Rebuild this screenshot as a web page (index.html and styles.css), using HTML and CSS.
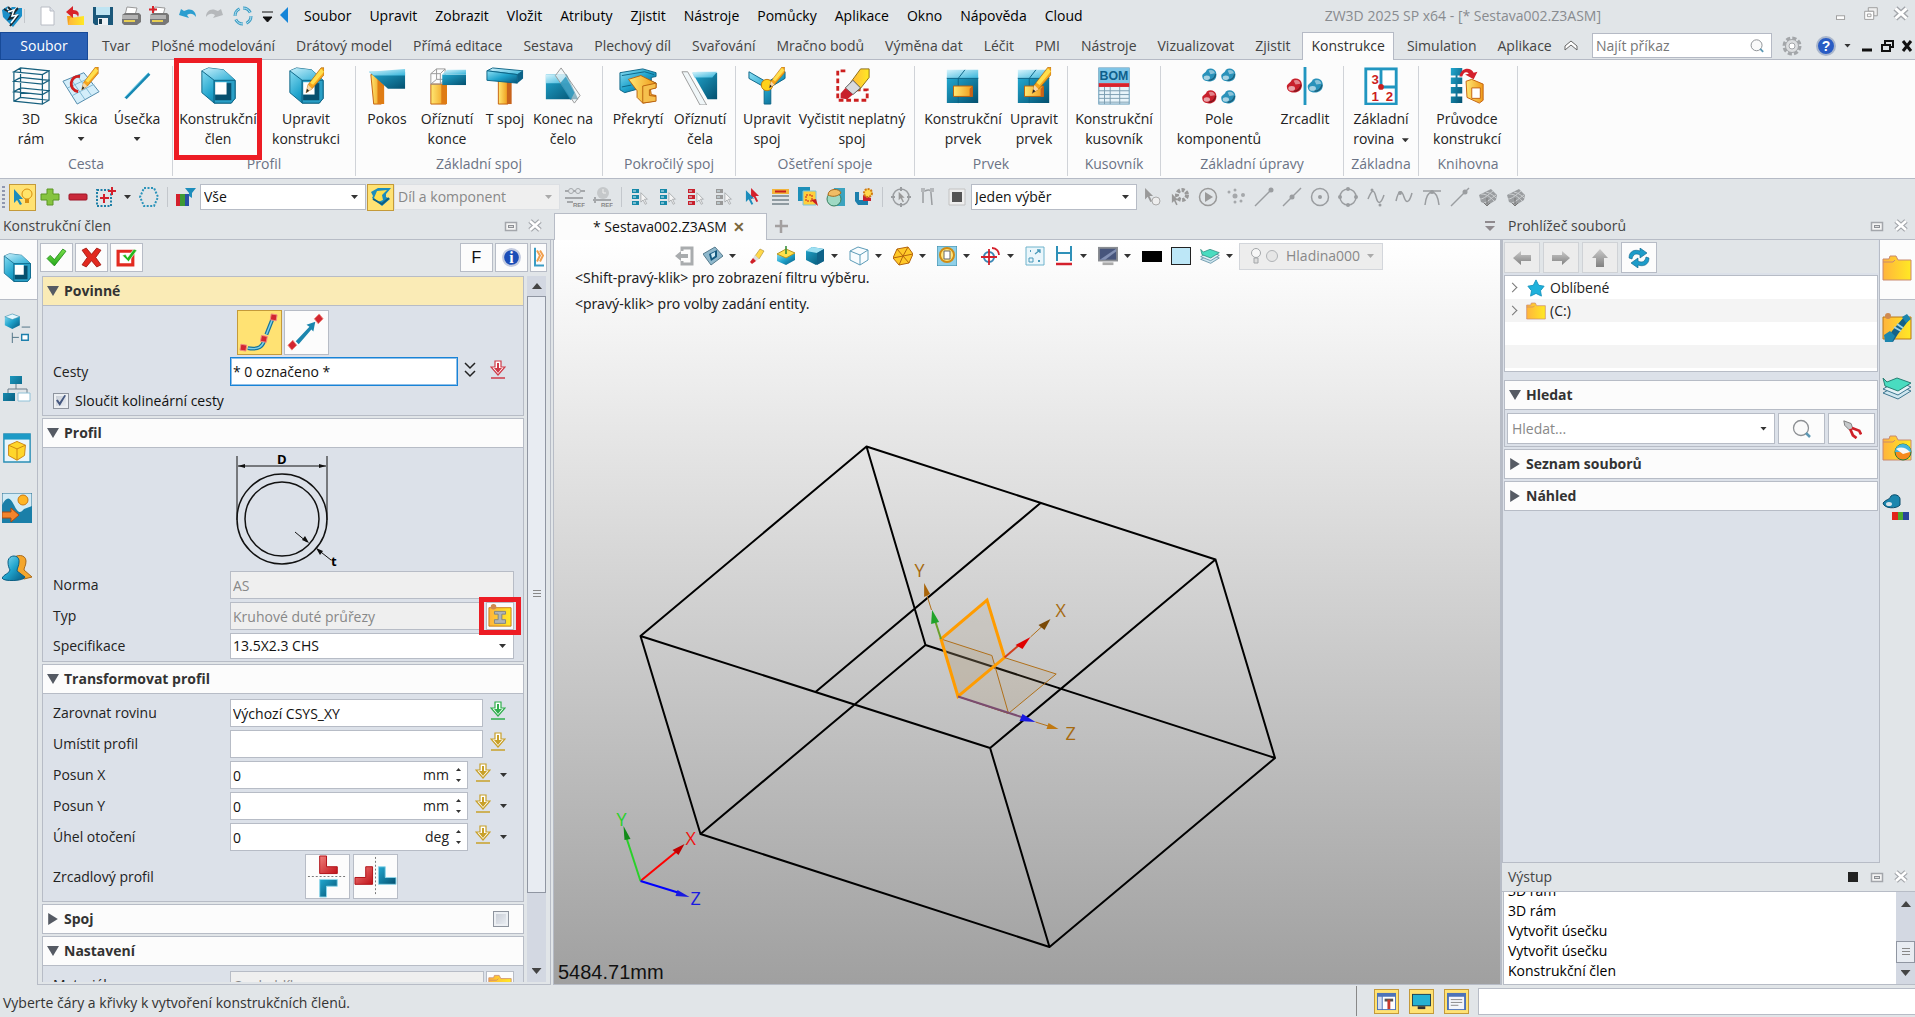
FILE: index.html
```html
<!DOCTYPE html>
<html lang="cs">
<head>
<meta charset="utf-8">
<title>ZW3D 2025 SP x64 - [* Sestava002.Z3ASM]</title>
<link rel="stylesheet" href="styles.css">
</head>
<body>
<svg class="defs" aria-hidden="true">
  <defs>
    <linearGradient id="gb" x1="0" y1="0" x2="1" y2="1"><stop offset="0" stop-color="#8fe0f4"/><stop offset=".5" stop-color="#1fa3cc"/><stop offset="1" stop-color="#07567c"/></linearGradient>
    <linearGradient id="gl" x1="0" y1="0" x2="1" y2="1"><stop offset="0" stop-color="#d6f4fd"/><stop offset="1" stop-color="#35b4da"/></linearGradient>
    <linearGradient id="gd" x1="0" y1="0" x2="1" y2="1"><stop offset="0" stop-color="#22a8d0"/><stop offset="1" stop-color="#04506f"/></linearGradient>
    <linearGradient id="gy" x1="0" y1="0" x2="1" y2="0"><stop offset="0" stop-color="#ffe873"/><stop offset="1" stop-color="#ef9a1a"/></linearGradient>
    <linearGradient id="go" x1="0" y1="0" x2="1" y2="0"><stop offset="0" stop-color="#ffb43c"/><stop offset="1" stop-color="#ffe924"/></linearGradient>
    <linearGradient id="gr" x1="0" y1="0" x2="1" y2="1"><stop offset="0" stop-color="#f0807c"/><stop offset="1" stop-color="#c01018"/></linearGradient>
    <linearGradient id="gg" x1="0" y1="0" x2="0" y2="1"><stop offset="0" stop-color="#c9c9c9"/><stop offset="1" stop-color="#808080"/></linearGradient>
    <linearGradient id="gn" x1="0" y1="0" x2="0" y2="1"><stop offset="0" stop-color="#7be04a"/><stop offset="1" stop-color="#24a81c"/></linearGradient>
  </defs>
  <symbol id="pencil" viewBox="0 0 20 26"><path d="M17 0h3v7L8 21l-6 4 2-8z" fill="#f7a61c" stroke="#b0680c" stroke-width=".7"/><path d="M17 1 6 15l3 2L20 4" fill="#ffdf4d"/><path d="m4 17 4 4-6 4z" fill="#f7d8a8"/><path d="m3 21 2 2-3 2z" fill="#222"/></symbol>
  <symbol id="frame3d" viewBox="0 0 40 40"><path d="M2 5 9 1 39 4 32 8zM2 5v31l30 3V8M39 4v31l-7 4M9 1v31l30 3M9 32l-7 4M2 26l30 3 7-4-30-3zM2 15l30 3 7-4-30-3z" fill="none" stroke="#17607e" stroke-width="1.300"/></symbol>
  <symbol id="sketch" viewBox="0 0 40 40"><path d="m1 15 22-9 16 20-23 13z" fill="#d4eefa" stroke="#4b86a8"/><path d="m9 12 15 22M16 9l15 21M6 22l22-10M11 30l23-12" stroke="#7db6d3" fill="none"/><path d="M19 10c-11-2-13 14-2 16" fill="none" stroke="#cf1f1f" stroke-width="3"/><use href="#pencil" x="17" y="0" width="23" height="25"/></symbol>
  <symbol id="line" viewBox="0 0 40 40"><path d="M8 33 33 7" stroke="#1789b3" stroke-width="3"/><path d="M7 32 32 6" stroke="#79cfe9"/></symbol>
  <symbol id="member" viewBox="0 0 40 40"><path d="m3 4 7-3 16 2 12 11v19l-4 5H16L3 27z" fill="url(#gb)" stroke="#0c6486"/><path d="M3 4l7-3 16 2 12 11H16z" fill="url(#gl)" opacity=".8"/><path d="m3 4 13 10v24" fill="none" stroke="#0c6486"/><path d="M16 14h22v19l-4 5H16z" fill="#2a9fc6" stroke="#0c6486"/><path d="M17 17h17v18H17z" fill="#07506f"/><path d="M17 16h12v13H17z" fill="#fff"/></symbol>
  <symbol id="member-edit" viewBox="0 0 40 40"><use href="#member"/><use href="#pencil" x="18" y="0" width="21" height="29"/></symbol>
  <symbol id="miter" viewBox="0 0 40 40"><path d="M3 8h11v31H6z" fill="url(#gy)" stroke="#c4600c"/><path d="M10 12l7 7v20h-7z" fill="#df7c14"/><path d="M1 5h38v18H21z" fill="url(#gd)"/><path d="m1 5 38-3v7H6z" fill="url(#gl)"/></symbol>
  <symbol id="trim-end" viewBox="0 0 40 40"><path d="M3 18h16v21H3z" fill="url(#gy)" stroke="#c4600c"/><path d="M14 18h6v21h-6z" fill="#df7c14"/><path d="M3 18V7l6-5h9v11l-5 5zM3 7h10v11M13 7l5-5M9 2v11l-6 5M9 13h9" fill="none" stroke="#999"/><path d="M15 8h25v11H15z" fill="url(#gd)"/><path d="m15 8 5-5h20v5z" fill="url(#gl)"/></symbol>
  <symbol id="tjoint" viewBox="0 0 40 40"><path d="M13 12h10v27H13z" fill="url(#gy)" stroke="#c4600c"/><path d="M22 15h5v24h-5z" fill="#c8631c"/><path d="M1 4 7 1l32 3-6 4z" fill="url(#gl)" stroke="#0c6486"/><path d="M1 4l32 4v9L1 14z" fill="url(#gb)" stroke="#0c6486"/><path d="m33 8 6-4v8l-6 5z" fill="#0b6288"/></symbol>
  <symbol id="endcap" viewBox="0 0 40 40"><path d="M2 8h22l12 26H2z" fill="url(#gd)"/><path d="M2 8h20l5 9H2z" fill="url(#gl)"/><path d="m12 9 6-8 20 29-6 8z" fill="#e8f1f5" fill-opacity=".6" stroke="#999"/><path d="m17 17 6-7 9 17-4 8z" fill="#2694ba" opacity=".8"/></symbol>
  <symbol id="overlap" viewBox="0 0 40 40"><path d="m1 6 24-4 14 4v4l-5 1v4l5 2-1 4-14 1L6 27l-5-3z" fill="url(#gb)" stroke="#0c6486"/><path d="m3 9 24-4 10 3M3 21l10-2" fill="none" stroke="#0c6486"/><path d="m10 13 13-4 16 8v5l-6 1 1 6 5 1-2 6-12 2-6-6v-7z" fill="url(#gy)" stroke="#b8600e"/><path d="m25 20 14-3v5l-7 2v6l7 1v5l-14 2z" fill="#f6c04d" stroke="#b8600e"/></symbol>
  <symbol id="trim-face" viewBox="0 0 40 40"><path d="M12 6h26v28H28z" fill="url(#gd)"/><path d="m12 6 5-1h21l-5 6H14z" fill="url(#gl)"/><path d="M1 5h6l20 35h-7z" fill="#e8f1f5" fill-opacity=".6" stroke="#999"/></symbol>
  <symbol id="joint-edit" viewBox="0 0 40 40"><path d="M1 5v7l16 9v18h7V21l15-9V5L20 16z" fill="url(#gb)" stroke="#0c6486"/><circle cx="20" cy="19" r="6" fill="#ffd21c" stroke="#c07a0c"/><use href="#pencil" x="19" y="0" width="21" height="23"/></symbol>
  <symbol id="erase-joint" viewBox="0 0 40 40"><path d="M13 4H5v31h31V24H25" fill="none" stroke="#cc1f1f" stroke-width="3" stroke-dasharray="5 3"/><path d="m29 2 9 0 0 9-11 14-9-8z" fill="url(#go)" stroke="#8a6a14"/><path d="m21 14 8 8-8 7-8-7z" fill="#d8dadd" stroke="#555"/><path d="m13 22 8 7-6 5-7-1 0-5z" fill="#c8202c"/></symbol>
  <symbol id="feature" viewBox="0 0 40 40"><path d="M3 11h33v27H3z" fill="url(#gd)"/><path d="M3 3h33v9H3z" fill="url(#gl)"/><path d="M15 12 22 3M3 12h33M15 12v26" stroke="#0c6486"/><path d="M10 20h20v11H10z" fill="url(#gy)" stroke="#b8600e"/><path d="m30 20-3 3v8h3z" fill="#c8631c"/></symbol>
  <symbol id="feature-edit" viewBox="0 0 40 40"><use href="#feature"/><use href="#pencil" x="16" y="0" width="22" height="29"/></symbol>
  <symbol id="part" viewBox="0 0 18 16"><path d="M1 10c-1-4 4-4 5-8 4-3 9-1 10 2 2 5 0 10-5 11C6 16 1 14 1 10z"/><path d="M8 3c3-2 7 0 7 3l-5 1z" fill="#fff" fill-opacity=".45"/><ellipse cx="6" cy="11" rx="3.500" ry="2.500" fill="#fff" fill-opacity=".6"/><path d="M8 14c4 0 7-3 8-7" fill="none" stroke="#000" stroke-opacity=".35" stroke-width="1.500"/></symbol>
  <symbol id="pattern" viewBox="0 0 40 40"><g fill="#2a92ba"><use href="#part" x="1" y="1" width="18" height="15"/><use href="#part" x="21" y="1" width="18" height="15"/><use href="#part" x="21" y="24" width="18" height="15"/></g><use href="#part" x="1" y="24" width="18" height="15" fill="#c8202c"/></symbol>
  <symbol id="mirror" viewBox="0 0 40 40"><use href="#part" x="0" y="11" width="18" height="17" fill="#c8202c"/><use href="#part" x="22" y="11" width="18" height="17" fill="#2a92ba"/><path d="M20 0v40" stroke="#2196c0" stroke-width="3"/></symbol>
  <symbol id="wizard" viewBox="0 0 40 40"><path d="M9 2v36" stroke="#1478a0" stroke-width="2"/><path d="M3 1h12v8H3zM3 11h12v7H3zM3 21h12v7H3zM3 31h12v7H3z" fill="url(#gd)"/><path d="M12 10C14 0 24 0 27 6l4-1-4 8-9-5 4-1c-3-3-6-1-7 3z" fill="#d4202c"/><path d="m19 15 6-2 12 5v17l-4 3-13-6z" fill="url(#gy)" stroke="#c4600c"/><path d="M25 22h9v11h-9z" fill="#fff" stroke="#c4600c"/></symbol>

  <symbol id="logo" viewBox="0 0 24 24"><path d="M2 6 8 2l-2 6 6-5 4 0-5 8 8-7 3 0v8l-9 11L3 13z" fill="#1a8fc9"/><path d="m4 5 8 5-3 5 8-2-7 9M8 3l5 5M18 4l-5 6 4 2" fill="none" stroke="#1b2a33" stroke-width="2"/><path d="m8 8 6-2-2 6 5-1-6 8" fill="none" stroke="#fff" stroke-width="1.500"/></symbol>
  <symbol id="newfile" viewBox="0 0 20 20"><path d="M4 1h9l4 4v14H4z" fill="#fff" stroke="#b8bcc4"/><path d="M13 1v4h4" fill="#dde2ea" stroke="#b8bcc4"/></symbol>
  <symbol id="open" viewBox="0 0 20 20"><path d="M2 10h5l2 2h9v7H3z" fill="#f5a21a"/><path d="m5 12 14-2v9H3z" fill="url(#go)"/><path d="M1 6l7-6v4c5 0 7 3 5 7-1-3-2-3-5-3v4z" fill="#d8232a"/></symbol>
  <symbol id="save" viewBox="0 0 20 20"><path d="M0 1h20v18H2l-2-2z" fill="#1b587a"/><path d="M3 1h14v8H3z" fill="#bfe4f2"/><path d="M5 12h10v7H5z" fill="#eef2f5"/><path d="M6 13h3v5H6z" fill="#17384a"/></symbol>
  <symbol id="print" viewBox="0 0 20 20"><path d="m6 1 10 1-2 7H4z" fill="#fff" stroke="#999"/><path d="m1 9 3-2h14l2 2v7l-4 3H3l-2-2z" fill="#777"/><path d="M1 9h16v4H1z" fill="#b3b3b3"/><path d="M3 14h11v2H3z" fill="#e8cf52"/></symbol>
  <symbol id="printplus" viewBox="0 0 20 20"><use href="#print"/><path d="M4 0v7M0 3.500h8" stroke="#d8232a" stroke-width="2"/></symbol>
  <symbol id="undo" viewBox="0 0 20 20"><path d="m2 9 2-6 3 2c7-4 12 0 12 6-3-4-6-4-9-2l2 3z" fill="#2b9ed0"/></symbol>
  <symbol id="redo" viewBox="0 0 20 20"><path d="m18 9-2-6-3 2C6 1 1 5 1 11c3-4 6-4 9-2l-2 3z" fill="#b5b8bb"/></symbol>
  <symbol id="cycle" viewBox="0 0 20 20"><circle cx="10" cy="10" r="8" fill="none" stroke="#3a9cc4" stroke-width="3" stroke-dasharray="9 3.500"/><circle cx="10" cy="10" r="8" fill="none" stroke="#bfe6f4" stroke-width="1" stroke-dasharray="9 3.500"/></symbol>

  <symbol id="bulbpick" viewBox="0 0 20 20"><path d="M1 2v14l3-3 3 5 2-1-3-5h4z" fill="#1c8dbc"/><circle cx="14" cy="7" r="5" fill="#ffe46a" stroke="#d98f10"/><path d="M12 12h4v4h-4z" fill="#d98f10"/></symbol>
  <symbol id="plus" viewBox="0 0 20 20"><path d="M7 2h6v5h6v6h-6v5H7v-5H1V7h6z" fill="#86c440" stroke="#5b9625"/></symbol>
  <symbol id="minus" viewBox="0 0 20 20"><rect x="1" y="7" width="18" height="6" rx="1" fill="#c9283a" stroke="#9e1526"/></symbol>
  <symbol id="gridplus" viewBox="0 0 20 20"><path d="M1 3h14v16H1z" fill="none" stroke="#1d7fa6" stroke-width="2" stroke-dasharray="2 1.500"/><path d="M8 7v9M4 11h9M16 0v8M12 4h8" stroke="#d4202c" stroke-width="2"/></symbol>
  <symbol id="hex" viewBox="0 0 20 20"><path d="M5 1h10l4 9-4 9H5l-4-9z" fill="none" stroke="#2a93ba" stroke-width="2" stroke-dasharray="2 1.500"/></symbol>
  <symbol id="colfilter" viewBox="0 0 20 20"><path d="M0 7h4v12H0z" fill="#d4202c"/><path d="M4 7h5v12H4z" fill="#3f9a35"/><path d="M9 7h4v12H9z" fill="#2a4fa6"/><path d="M9 1h11l-4 5v5l-3-2V6z" fill="#1c8dbc"/></symbol>
  <symbol id="shapepick" viewBox="0 0 20 20"><path d="m0 5 7-4 13 0-5 6 0 3 4 2-8 7-10-8 1-2z" fill="#1c8dbc"/><path d="m6 4 10-1-5 5 1 5-5 2-4-4z" fill="#ffdf4d"/><path d="m2 12 9 5 7-6" fill="none" stroke="#0b5f84" stroke-width="2"/></symbol>
  <symbol id="pick" viewBox="0 0 12 18"><path d="M1 1v13l3-3 3 6 2-1-3-6h4z"/></symbol>
  <symbol id="list" viewBox="0 0 20 20"><path d="M2 2h7v4H2zM2 8h7v4H2zM2 14h7v4H2z"/><path d="M3 4h3M3 10h3M3 16h3" stroke="#d8f0f8"/><use href="#pick" x="10" y="5" width="9" height="13" fill="#f4f4f4" stroke="#9a9da0"/></symbol>
  <symbol id="duopick" viewBox="0 0 20 20"><use href="#pick" x="8" y="0" width="11" height="16" fill="#d4202c"/><use href="#pick" x="3" y="2" width="11" height="17" fill="#1c8dbc"/></symbol>
  <symbol id="rows" viewBox="0 0 20 20"><path d="M2 2h17v5H2z" fill="#f2b43a"/><path d="M5 4.500h11" stroke="#c81e1e" stroke-width="2"/><path d="M2 9h17M2 13h17M2 17h17" stroke="#8f9ba1" stroke-width="2"/></symbol>
  <symbol id="layerspick" viewBox="0 0 20 20"><path d="M0 0h12v14H0z" fill="#1d8fb8"/><path d="M5 4h13v14H5z" fill="#ffcf3a" stroke="#7ac6de"/><path d="M8 8h6v6H8z" fill="none" stroke="#c81e1e" stroke-dasharray="2 1"/><path d="m20 19-7-6 5-1z" fill="#c81e1e"/></symbol>
  <symbol id="capture" viewBox="0 0 20 20"><path d="M8 1h11v18H5z" fill="#3ba3bf"/><circle cx="8" cy="12" r="7" fill="#9fd9c4" stroke="#39805f"/><path d="M2 8c0-7 12-7 13-2-4 4-9 4-13 2z" fill="#f1bd66" stroke="#a86a1c"/></symbol>
  <symbol id="weldpick" viewBox="0 0 20 20"><path d="M1 5v9l3 4h10v-5H5V5z" fill="#1c7fac"/><path d="M9 8v6h8v-3z" fill="#c8202c"/><circle cx="14" cy="6" r="4" fill="#ffd84a" stroke="#d07a12" stroke-width="2" stroke-dasharray="2 1"/></symbol>
  <symbol id="targetpick" viewBox="0 0 20 20"><circle cx="10" cy="10" r="8" fill="none" stroke="#9a9da0" stroke-width="1.500"/><path d="M10 0v4M10 16v4M0 10h4M16 10h4" stroke="#9a9da0" stroke-width="2"/><use href="#pick" x="7" y="4" width="8" height="12" fill="#999"/></symbol>
  <symbol id="chain" viewBox="0 0 20 20"><path d="M4 16V3M6 4c4-2 6-1 6 2l1 12" fill="none" stroke="#9a9da0" stroke-width="1.500"/><path d="M2 1h4v4H2zM11 1h4v4h-4z" fill="#b5b8bb"/></symbol>
  <symbol id="square" viewBox="0 0 20 20"><path d="M2 2h16v16H2z" fill="#eee" stroke="#c2c2c2"/><path d="M5 5h10v10H5z" fill="#555"/></symbol>
  <symbol id="ghostpick" viewBox="0 0 20 20"><use href="#pick" x="2" y="0" width="11" height="16" fill="#999"/><circle cx="14" cy="14" r="4" fill="#eee" stroke="#aaa"/></symbol>
  <symbol id="gearpick" viewBox="0 0 20 20"><circle cx="12" cy="8" r="5" fill="none" stroke="#999" stroke-width="4" stroke-dasharray="3 1.500"/><use href="#pick" x="1" y="6" width="9" height="13" fill="#999"/></symbol>
  <symbol id="play" viewBox="0 0 20 20"><circle cx="10" cy="10" r="8.500" fill="none" stroke="#999" stroke-width="1.500"/><path d="m7 5 8 5-8 5z" fill="#999"/></symbol>
  <symbol id="dots" viewBox="0 0 20 20"><g fill="#a5a8ab"><circle cx="3" cy="5" r="1.500"/><circle cx="9" cy="9" r="2.500"/><circle cx="17" cy="8" r="2"/><circle cx="9" cy="15" r="1.500"/><circle cx="15" cy="14" r="1.500"/><circle cx="9" cy="3" r="1.500"/></g></symbol>
  <symbol id="gline" viewBox="0 0 20 20"><path d="M1 19 17 3" stroke="#9a9da0" stroke-width="1.500"/><circle cx="17" cy="3" r="2.500" fill="#9a9da0"/></symbol>
  <symbol id="gmid" viewBox="0 0 20 20"><path d="M1 19 19 1" stroke="#9a9da0" stroke-width="1.500"/><circle cx="10" cy="10" r="2.500" fill="#9a9da0"/></symbol>
  <symbol id="gon" viewBox="0 0 20 20"><path d="M1 19 19 1" stroke="#9a9da0" stroke-width="1.500"/><circle cx="15" cy="5" r="2.500" fill="#9a9da0"/></symbol>
  <symbol id="gcenter" viewBox="0 0 20 20"><circle cx="10" cy="10" r="8.500" fill="none" stroke="#9a9da0" stroke-width="1.500"/><circle cx="10" cy="10" r="2" fill="#9a9da0"/></symbol>
  <symbol id="gquad" viewBox="0 0 20 20"><circle cx="10" cy="10" r="8" fill="none" stroke="#9a9da0" stroke-width="1.500"/><g fill="#9a9da0"><circle cx="10" cy="2" r="2"/><circle cx="10" cy="18" r="2"/><circle cx="2" cy="10" r="2"/><circle cx="18" cy="10" r="2"/></g></symbol>
  <symbol id="gwave" viewBox="0 0 20 20"><path d="M2 12c4-10 6-10 8-2s5 7 8-2" fill="none" stroke="#9a9da0" stroke-width="1.500"/><circle cx="6" cy="3" r="1.500" fill="#9a9da0"/><circle cx="14" cy="18" r="1.500" fill="#9a9da0"/></symbol>
  <symbol id="gwave2" viewBox="0 0 20 20"><path d="M2 14c3-13 6-10 8-4s5 7 8-4" fill="none" stroke="#9a9da0" stroke-width="1.500"/><circle cx="6" cy="6" r="2" fill="#9a9da0"/></symbol>
  <symbol id="gtan" viewBox="0 0 20 20"><path d="M1 4h18M3 18C5 1 15 1 17 18" fill="none" stroke="#9a9da0" stroke-width="1.500"/><circle cx="10" cy="5" r="2" fill="#9a9da0"/></symbol>
  <symbol id="gmesh" viewBox="0 0 20 20"><path d="m1 8 6-3 6-3 6 6-1 5-8 5-7-3z" fill="#9a9da0"/><path d="M3 7c6 0 9 3 13 7M8 5c5 1 8 4 10 6M2 12c4 0 8-4 13-8M6 16c4-1 7-5 12-8" fill="none" stroke="#cdd0d2"/><path d="M9 11v8M6 16l3 3 3-3" stroke="#777" fill="none"/></symbol>

  <symbol id="float" viewBox="0 0 16 14"><rect x="2.500" y="3.500" width="11" height="8" fill="#f4f4f4" stroke="#a3a6ab" stroke-width="1.500"/><rect x="5.500" y="6.500" width="5" height="2" fill="#ddd" stroke="#8d9095"/></symbol>
  <symbol id="close" viewBox="0 0 16 16"><path d="m3 3 10 9M13 3 3 12" stroke="#a3a6ab" stroke-width="5"/><path d="m3 3 10 9M13 3 3 12" stroke="#fff" stroke-width="2.500"/></symbol>
  <symbol id="ok" viewBox="0 0 20 20"><path d="m1 11 3-3 4 4L16 2l3 2L8 18z" fill="url(#gn)" stroke="#1f8a18" stroke-width=".8"/></symbol>
  <symbol id="no" viewBox="0 0 20 20"><path d="m1 3 4-2 5 6 5-6 4 2-5 7 5 7-4 2-5-6-5 6-4-2 5-7z" fill="#e22a20" stroke="#a01510" stroke-width=".8"/></symbol>
  <symbol id="apply" viewBox="0 0 20 20"><path d="M2 4h14v13H2z" fill="#fff" stroke="#e22a20" stroke-width="3"/><path d="m6 8 3-1 2 3 6-8 3 1-8 11z" fill="#22b81c" stroke="#fff" stroke-width=".6"/></symbol>
  <symbol id="rollout" viewBox="0 0 12 20"><path d="M2 0v18h9" fill="none" stroke="#3a9cc4" stroke-width="2"/><path d="m4 3 3 5-3 6M7 3l3 5-3 6" fill="none" stroke="#f0a050" stroke-width="2"/></symbol>
  <symbol id="path1" viewBox="0 0 44 44"><path d="M10 38c12 2 15-2 17-8M29 24l6-15" fill="none" stroke="#16749a" stroke-width="4"/><path d="M10 38c12 2 15-2 17-8M29 24l6-15" fill="none" stroke="#7ed0ea" stroke-width="1.500"/><g fill="#d22630" stroke="#f08a80"><path d="m3 34 6 1-1 6-6-1zM24 25l6 1-1 6-6-1zM34 3l6 1-1 6-6-1z"/></g></symbol>
  <symbol id="path2" viewBox="0 0 44 44"><path d="M11 31 25 16l-3-2 9-3-2 10-2-2-13 15z" fill="#1c86ae"/><g fill="#d22630" stroke="#f08a80"><path d="m8 30 4 5-5 5-4-5zM35 3l4 5-5 5-4-5z"/></g></symbol>
  <symbol id="drop" viewBox="0 0 16 20"><path d="M5 1h6v6h4l-7 8-7-8h4z" fill="#fff" stroke="currentColor" stroke-width="1.200"/><path d="M7 3h2v5h3l-4 5-4-5h3z" fill="currentColor"/><path d="M1 18h14" stroke="currentColor" stroke-width="1.500"/></symbol>
  <symbol id="lib" viewBox="0 0 26 26"><path d="M1 4h24v20H1z" fill="url(#go)" stroke="#c47a14"/><circle cx="6" cy="3" r="3" fill="#cf8a50"/><path d="M7 8h12v3h-4v6h4v4H7v-4h4v-6H7z" fill="#aeb4b8" stroke="#7c8286"/></symbol>
  <symbol id="mirrorh" viewBox="0 0 44 44"><path d="M2 22h40" stroke="#777" stroke-dasharray="2 2"/><path d="M14 1h7v11h11v7H14z" fill="url(#gr)" stroke="#b01018"/><path d="M14 25h18v7H21v11h-7z" fill="url(#gd)" stroke="#8fd6ea"/></symbol>
  <symbol id="mirrorv" viewBox="0 0 44 44"><path d="M22 2v40" stroke="#777" stroke-dasharray="2 2"/><path d="M12 12h7v18H1v-7h11z" fill="url(#gr)" stroke="#b01018"/><path d="M25 12h7v11h11v7H25z" fill="url(#gd)" stroke="#8fd6ea"/></symbol>

  <symbol id="tree" viewBox="0 0 30 32"><path d="m2 4 8-3 8 3v9l-8 4-8-4z" fill="url(#gb)"/><path d="m2 4 8-3 8 3-8 3z" fill="#e5f7fd" stroke="#3e8eac" stroke-width=".6"/><path d="M10 21v11M10 26h7M20 15h9" stroke="#4b6f82" fill="none"/><path d="M20 23h7v6h-7z" fill="#fff" stroke="#1c7fac" stroke-width="1.500"/></symbol>
  <symbol id="hier" viewBox="0 0 30 30"><path d="M14 8v8M6 22v-6h19v6" fill="none" stroke="#6c7f8b"/><path d="M8 3h12v8H8zM1 20h12v8H1z" fill="url(#gd)"/><path d="M16 20h12v8H16z" fill="#fff" stroke="#8fc2d8"/></symbol>
  <symbol id="view" viewBox="0 0 30 32"><path d="M1 1h28v30H1z" fill="#e9f5fb" stroke="#2a8fb5" stroke-width="1.500"/><path d="M1 1h28v6H1z" fill="#1d9ac6"/><path d="m6 13 9-4 9 4-1 11-8 5-9-5z" fill="#ffd62a" stroke="#cc8310"/><path d="m6 13 9 4 9-4M15 17v12" fill="none" stroke="#cc8310"/></symbol>
  <symbol id="scene" viewBox="0 0 30 30"><path d="M0 0h30v30H0z" fill="#d3ebf5" stroke="#276f92"/><path d="M0 12c5-9 8-8 12 0 4 8 6 9 10 4l8-3v17H0z" fill="#1a7fa8"/><circle cx="21" cy="7" r="5" fill="#ffb524" stroke="#c97812"/><path d="M0 19h9v-4l8 7-8 7v-4H0z" fill="#f2842c" stroke="#a84a10"/></symbol>
  <symbol id="users" viewBox="0 0 30 28"><path d="M12 5c1-5 12-5 12 2 0 5-2 6-2 9l8 7-8 2-7-5z" fill="#f4a62c" stroke="#a86a1c"/><path d="M6 8c0-8 12-8 11 0 0 4-2 6-2 9l8 6c0 4-22 5-23 1 2-4 7-4 8-8-1-2-2-4-2-8z" fill="url(#gb)" stroke="#0b5f84"/></symbol>
  <symbol id="folder" viewBox="0 0 30 26"><path d="M1 4h6l1-3h6l2 4h13v20H1z" fill="url(#go)" stroke="#c98a70"/><path d="M1 7h10l2-2" fill="none" stroke="#c98a70"/></symbol>
  <symbol id="boltbox" viewBox="0 0 30 30"><path d="M1 4h28v22H1z" fill="url(#go)" stroke="#b97818"/><circle cx="6" cy="3" r="3" fill="#cf8a50"/><path d="m5 27 5-9 12-14 5 3-11 14-5 8z" fill="#156288"/><path d="m2 22 6-4 5 5-3 6H3zM20 4l5-3 4 5-5 4z" fill="#1c86ae"/><path d="m12 14 7 4M15 11l6 4" stroke="#9fd5e8" stroke-width="2"/></symbol>
  <symbol id="sheets" viewBox="0 0 30 24"><path d="m1 17 15 6 13-8-14-6z" fill="#cfe6ef" stroke="#3e7790"/><path d="m1 13 15 6 13-8-14-6z" fill="#e3f1f6" stroke="#3e7790"/><path d="m1 2 4 4 10-4 14 5-13 8L3 10z" fill="#49dcc0" stroke="#277f74"/></symbol>
  <symbol id="folderball" viewBox="0 0 30 26"><use href="#folder"/><circle cx="21" cy="17" r="8" fill="#f58a1e" stroke="#2a7a3c"/><path d="M13 17a8 8 0 0 1 16 0z" fill="#45b5de"/><path d="M14 14q7-4 14 3l-7 2z" fill="#f7f7f7"/></symbol>
  <symbol id="partcolor" viewBox="0 0 30 28"><path d="M1 9C4 5 8 6 9 2c4-3 9 0 9 3v6c-3 4-16 4-17-2z" fill="#1b86ae" stroke="#0b4d6b"/><ellipse cx="7" cy="10" rx="3" ry="2" fill="#d6e3e9"/><path d="M10 18h6v8h-6z" fill="#e2231a"/><path d="M16 18h5v8h-5z" fill="#4da82e"/><path d="M21 18h6v8h-6z" fill="#29439a"/></symbol>
  <symbol id="aleft" viewBox="0 0 20 20"><path d="m1 10 8-7v4h10v6H9v4z" fill="url(#gg)"/></symbol>
  <symbol id="aright" viewBox="0 0 20 20"><path d="m19 10-8-7v4H1v6h10v4z" fill="url(#gg)"/></symbol>
  <symbol id="aup" viewBox="0 0 20 20"><path d="m10 1 8 9h-4v9H6v-9H2z" fill="url(#gg)"/></symbol>
  <symbol id="reload" viewBox="0 0 22 20"><path d="M1 10C1 3 7 1 12 3V0l7 5-7 5V7C8 5 5 6 4 11zM21 10c0 7-6 9-11 7v3l-7-5 7-5v3c4 2 7 1 8-4z" fill="#1d9cc9" stroke="#0b6288" stroke-width=".6"/></symbol>
  <symbol id="star" viewBox="0 0 20 20"><path d="m10 1 3 6 6 1-4 5 1 6-6-3-6 3 1-6-4-5 6-1z" fill="#20b2dc" stroke="#1493bd"/></symbol>
  <symbol id="lens" viewBox="0 0 20 20"><circle cx="9" cy="9" r="7.500" fill="#fafafa" stroke="#8c8f93" stroke-width="1.300"/><path d="m14 14 4 4" stroke="#5c98b4" stroke-width="2.500"/></symbol>
  <symbol id="pliers" viewBox="0 0 22 22"><path d="m2 2 8 3 2 6-4 1-5-5z" fill="#c5c8ca" stroke="#777"/><path d="m11 10 8 3 2 4M9 11l3 7 4 3" fill="none" stroke="#cf2028" stroke-width="3"/></symbol>
  <symbol id="gear" viewBox="0 0 20 20"><circle cx="10" cy="10" r="7.500" fill="none" stroke="#a3a6a9" stroke-width="4" stroke-dasharray="3.900 2"/><circle cx="10" cy="10" r="6.500" fill="#dcdee0" stroke="#a3a6a9"/><circle cx="10" cy="10" r="3" fill="#fff" stroke="#a3a6a9"/></symbol>

  <symbol id="exit" viewBox="0 0 20 20"><path d="M8 5V2h10v16H8v-3" fill="none" stroke="#a9acae" stroke-width="3"/><path d="m1 10 6-5v3h7v4H7v3z" fill="#a9acae"/></symbol>
  <symbol id="plane" viewBox="0 0 20 20"><path d="m0 8 12-7 8 9-12 9z" fill="#8fb8cc" stroke="#557a8c"/><path d="M6 8l8-4v7l-6 4z" fill="#145a80"/><path d="m8 8 4-2v4l-3 2z" fill="#cfeaf5"/></symbol>
  <symbol id="eraser" viewBox="0 0 20 20"><path d="m13 3 4 2-5 8-4-3z" fill="#ffd84a" stroke="#a88a2c" stroke-width=".6"/><path d="m8 9 4 4-3 2-3-3z" fill="#ddd"/><path d="m6 12 3 3-4 3-2-2z" fill="#cf2028"/></symbol>
  <symbol id="boxy" viewBox="0 0 20 20"><path d="m1 8 9 3 9-4v7l-9 5-9-4z" fill="url(#gb)"/><path d="m1 8 9-5 9 4-9 5z" fill="#ffe04a" stroke="#b99420"/><path d="M10 0v8" stroke="#2c8a34" stroke-width="1.500"/></symbol>
  <symbol id="boxb" viewBox="0 0 20 20"><path d="m1 5 6-4 12 2v12l-8 4-10-5z" fill="url(#gd)"/><path d="m1 5 6-4 12 2-7 4z" fill="#9fe0f2"/><path d="m12 7 7-4v12l-7 4z" fill="#0f6288"/></symbol>
  <symbol id="boxw" viewBox="0 0 20 20"><path d="m1 5 8-4 10 3v10l-8 5-10-5z" fill="#f8fcfe" stroke="#5d9cb8"/><path d="m1 5 10 4 8-5M11 9v10" fill="none" stroke="#5d9cb8"/></symbol>
  <symbol id="poly" viewBox="0 0 20 20"><path d="m4 3 11-2 5 7-4 9-10 2-6-7z" fill="#ffc928" stroke="#b5650c"/><path d="m4 3 6 7 5-9M10 10l10-2M10 10l6 7M10 10l-4 9M10 10l-10 2" fill="none" stroke="#b5650c"/></symbol>
  <symbol id="zoomdoc" viewBox="0 0 20 20"><path d="M0 0h20v20H0z" fill="#8fd0e8" stroke="#3a86a4"/><circle cx="10" cy="9" r="7" fill="#ffe680" stroke="#d08c14" stroke-width="2"/><path d="M7 5h6v8H7z" fill="#fff" stroke="#666"/></symbol>
  <symbol id="target" viewBox="0 0 20 20"><circle cx="8" cy="11" r="5" fill="none" stroke="#3a86b4" stroke-width="2"/><path d="M8 3v16M0 11h16M11 2c5 0 7 4 7 7" fill="none" stroke="#d4202c" stroke-width="1.800"/></symbol>
  <symbol id="fit" viewBox="0 0 20 20"><path d="M1 1h18v18H1z" fill="#eaf6fb" stroke="#6fb3cc"/><path d="M10 8l5-4M15 7V4h-3" fill="none" stroke="#4a9aba" stroke-width="1.300"/><path d="M4 12h4v4H4z" fill="none" stroke="#4a9aba"/><path d="M5 5h1M13 15h2" stroke="#4a9aba" stroke-width="2"/></symbol>
  <symbol id="dim" viewBox="0 0 20 20"><path d="M3 0v15M17 0v15M3 7h14" stroke="#2e90b8" stroke-width="2"/><path d="M2 18h16" stroke="#d4202c" stroke-width="2.500"/></symbol>
  <symbol id="screen" viewBox="0 0 22 20"><path d="M0 0h22v16H0z" fill="#8a8d92"/><path d="M2 2h18v12H2z" fill="#47557c"/><path d="M2 14 20 2v3L8 14z" fill="#8290b4"/><path d="M5 17h12v3H5z" fill="#aaa"/></symbol>
  <symbol id="lamp" viewBox="0 0 12 18"><circle cx="6" cy="6" r="4.500" fill="#f7f7f7" stroke="#a3a6a9"/><path d="M4 11h4v5H4z" fill="#ddd" stroke="#a3a6a9"/></symbol>
  <symbol id="tool" viewBox="0 0 20 20"><path d="M0 1h20v18H0z" fill="#4d73b8"/><path d="M6 5h13v13H6z" fill="#fff"/><path d="M1 5h4v13H1z" fill="#d5def0"/><path d="M8 7h9v3H8z" fill="#555"/><path d="M11 8h3v10h-3z" fill="#c8392c"/></symbol>
  <symbol id="monitor" viewBox="0 0 20 20"><path d="M0 2h20v13H0z" fill="#25414f"/><path d="M1 3h18v11H1z" fill="#25b2d2"/><path d="M6 15h8v3H6z" fill="#333"/></symbol>
  <symbol id="note" viewBox="0 0 20 20"><path d="M0 1h20v18H0z" fill="#4d73b8"/><path d="M2 5h16v13H2z" fill="#f4f6fb"/><path d="M4 8h12M4 11h12M4 14h8" stroke="#888"/></symbol>
</svg>

<div class="app">
<header class="titlebar">
  <svg class="i24"><use href="#logo"/></svg><span class="vsep"></span>
  <div class="quick">
    <button aria-label="Nový"><svg><use href="#newfile"/></svg></button><button aria-label="Otevřít"><svg><use href="#open"/></svg></button><button aria-label="Uložit"><svg><use href="#save"/></svg></button><button aria-label="Tisk"><svg><use href="#print"/></svg></button><button aria-label="Rychlý tisk"><svg><use href="#printplus"/></svg></button><button aria-label="Zpět"><svg><use href="#undo"/></svg></button><button aria-label="Znovu"><svg><use href="#redo"/></svg></button><button aria-label="Obnovit"><svg><use href="#cycle"/></svg></button><button class="narrow" aria-label="Více"><svg><path d="M5 6h11M6 11h9l-4.500 5z" fill="#111" stroke="#111"/></svg></button><button class="narrow" aria-label="Skrýt nabídku"><svg><path d="M13 1v16L5 9z" fill="#1585d8"/></svg></button>
  </div>
  <nav class="menu"><a href="#">Soubor</a><a href="#">Upravit</a><a href="#">Zobrazit</a><a href="#">Vložit</a><a href="#">Atributy</a><a href="#">Zjistit</a><a href="#">Nástroje</a><a href="#">Pomůcky</a><a href="#">Aplikace</a><a href="#">Okno</a><a href="#">Nápověda</a><a href="#">Cloud</a></nav>
  <span class="apptitle">ZW3D 2025 SP x64 - [* Sestava002.Z3ASM]</span>
  <div class="winbtns">
    <button aria-label="Minimalizovat"><svg viewBox="0 0 20 20"><rect x="5" y="12" width="9" height="4" fill="#fff" stroke="#999"/></svg></button><button aria-label="Obnovit okno"><svg viewBox="0 0 20 20"><path d="M7 3h10v9h-4V7H7z" fill="#eee" stroke="#999"/><path d="M3 7h10v9H3z" fill="#fff" stroke="#999"/><path d="M6 10h4v3H6z" fill="none" stroke="#999"/></svg></button><button aria-label="Zavřít"><svg><use href="#close"/></svg></button>
  </div>
</header>

<nav class="tabs">
  <a class="file" href="#">Soubor</a><a href="#">Tvar</a><a href="#">Plošné modelování</a><a href="#">Drátový model</a><a href="#">Přímá editace</a><a href="#">Sestava</a><a href="#">Plechový díl</a><a href="#">Svařování</a><a href="#">Mračno bodů</a><a href="#">Výměna dat</a><a href="#">Léčit</a><a href="#">PMI</a><a href="#">Nástroje</a><a href="#">Vizualizovat</a><a href="#">Zjistit</a><a class="active" href="#">Konstrukce</a><a href="#">Simulation</a><a href="#">Aplikace</a>
  <div class="tabtools">
    <button aria-label="Sbalit pás karet"><svg class="i16" viewBox="0 0 16 16"><path d="m2 8 6-5 6 5v4L8 7l-6 5z" fill="#fff" stroke="#666"/></svg></button>
    <label class="search"><input type="text" placeholder="Najít příkaz" aria-label="Najít příkaz"><svg class="i16"><use href="#lens"/></svg></label>
    <button aria-label="Nastavení"><svg class="i20"><use href="#gear"/></svg></button>
    <button aria-label="Nápověda" class="helpbtn"><svg class="i20" viewBox="0 0 20 20"><circle cx="10" cy="10" r="9" fill="#2a5cc4" stroke="#a9b6cc" stroke-width="2"/><text x="10" y="15" text-anchor="middle" font-size="14" class="icon-bold" fill="#fff">?</text></svg><i class="caret"></i></button>
    <button aria-label="Minimalizovat dokument"><svg class="i16" viewBox="0 0 16 16"><path d="M3 12h10" stroke="#111" stroke-width="3"/></svg></button>
    <button aria-label="Obnovit dokument"><svg class="i16" viewBox="0 0 16 16"><path d="M6 6V3h8v6h-3M3 7h8v6H3zM3 7h8M6 3h8" fill="none" stroke="#111" stroke-width="2"/></svg></button>
    <button aria-label="Zavřít dokument"><svg class="i16" viewBox="0 0 16 16"><path d="m4 3 8 10M12 3 4 13" stroke="#111" stroke-width="3"/></svg></button>
  </div>
</nav>

<section class="ribbon">
  <div class="group g-cesta"><div class="items"><button><svg><use href="#frame3d"/></svg>3D<br>rám</button><button><svg><use href="#sketch"/></svg>Skica<i class="caret"></i></button><button class="w60"><svg><use href="#line"/></svg>Úsečka<i class="caret"></i></button></div><h2>Cesta</h2></div>
  <div class="group g-profil"><div class="items"><button class="w88 marked"><svg><use href="#member"/></svg>Konstrukční<br>člen</button><button class="w88"><svg><use href="#member-edit"/></svg>Upravit<br>konstrukci</button></div><h2>Profil</h2></div>
  <div class="group g-spoj"><div class="items"><button class="w54"><svg><use href="#miter"/></svg>Pokos</button><button class="w64"><svg><use href="#trim-end"/></svg>Oříznutí<br>konce</button><button class="w50"><svg><use href="#tjoint"/></svg>T spoj</button><button class="w64"><svg><use href="#endcap"/></svg>Konec na<br>čelo</button></div><h2>Základní spoj</h2></div>
  <div class="group g-pokr"><div class="items"><button class="w60"><svg><use href="#overlap"/></svg>Překrytí</button><button class="w60"><svg><use href="#trim-face"/></svg>Oříznutí<br>čela</button></div><h2>Pokročilý spoj</h2></div>
  <div class="group g-oset"><div class="items"><button class="w54"><svg><use href="#joint-edit"/></svg>Upravit<br>spoj</button><button class="w116"><svg><use href="#erase-joint"/></svg>Vyčistit neplatný<br>spoj</button></div><h2>Ošetření spoje</h2></div>
  <div class="group g-prvek"><div class="items"><button class="w88"><svg><use href="#feature"/></svg>Konstrukční<br>prvek</button><button class="w54"><svg><use href="#feature-edit"/></svg>Upravit<br>prvek</button></div><h2>Prvek</h2></div>
  <div class="group g-kus"><div class="items"><button class="w88"><svg viewBox="0 0 40 40"><rect x="4" y="1" width="32" height="38" fill="#e8f4fa" stroke="#5e96b6"/><path d="M4 1h32v16H4z" fill="#7fc4e6"/><path d="M4 17h32v4H4z" fill="#d8222c"/><path d="M4 25h32M4 29h32M4 33h32M4 37h32M10 21v18M16 21v18M26 21v18" stroke="#7a9cb0"/><text x="20" y="14" text-anchor="middle" class="icon-bold" font-size="13" fill="#0d5f8c">BOM</text></svg>Konstrukční<br>kusovník</button></div><h2>Kusovník</h2></div>
  <div class="group g-uprav"><div class="items"><button class="w88"><svg><use href="#pattern"/></svg>Pole<br>komponentů</button><button class="w64"><svg><use href="#mirror"/></svg>Zrcadlit</button></div><h2>Základní úpravy</h2></div>
  <div class="group g-zakl"><div class="items"><button class="w64"><svg viewBox="0 0 40 40"><rect x="4" y="2" width="32" height="37" fill="#fff" stroke="#2196c0" stroke-width="3"/><path d="M20 2v19h16" fill="none" stroke="#2196c0" stroke-width="3"/><circle cx="20" cy="21" r="3" fill="#cc1f1f"/><g class="icon-bold" font-size="14" fill="#cc1f1f"><text x="10" y="18">3</text><text x="10" y="36">1</text><text x="25" y="36">2</text></g></svg>Základní<br>rovina <i class="caret inl"></i></button></div><h2>Základna</h2></div>
  <div class="group g-knih"><div class="items"><button class="w88"><svg><use href="#wizard"/></svg>Průvodce<br>konstrukcí</button></div><h2>Knihovna</h2></div>
</section>

<section class="selbar">
  <span class="grip"></span>
  <button class="on" aria-label="Výběr"><svg><use href="#bulbpick"/></svg></button><button aria-label="Přidat"><svg><use href="#plus"/></svg></button><button aria-label="Odebrat"><svg><use href="#minus"/></svg></button><button aria-label="Oblast"><svg><use href="#gridplus"/></svg></button><button class="w15" aria-label="Typ oblasti"><i class="caret"></i></button><button aria-label="Mnohoúhelník"><svg><use href="#hex"/></svg></button><span class="vsep"></span><button aria-label="Filtr barev"><svg><use href="#colfilter"/></svg></button>
  <span class="select"><select aria-label="Filtr"><option>Vše</option></select><i class="caret"></i></span>
  <button class="on" aria-label="Rozsah"><svg><use href="#shapepick"/></svg></button>
  <span class="select off"><select aria-label="Rozsah výběru" disabled><option>Díl a komponent</option></select><i class="caret"></i></span>
  <button aria-label="Reference"><svg viewBox="0 0 20 20"><path d="M0 4h20M0 11h18M2 15h6" stroke="#a5a8ab" stroke-width="2"/><circle cx="6" cy="4" r="2.500" fill="#e1e5e8" stroke="#a5a8ab"/><circle cx="13" cy="4" r="2.500" fill="#e1e5e8" stroke="#a5a8ab"/><text x="8" y="20" font-size="6" class="icon-bold" fill="#888">REF</text></svg></button><button aria-label="Reference v čase"><svg viewBox="0 0 20 20"><circle cx="10" cy="6" r="6" fill="#c5c8ca"/><path d="M10 2v4h3" stroke="#eee" fill="none"/><path d="M0 13h18M2 10v6" stroke="#a5a8ab" stroke-width="2"/><text x="8" y="20" font-size="6" class="icon-bold" fill="#888">REF</text></svg></button><span class="vsep"></span>
  <button class="blue" aria-label="Vybrat vše"><svg><use href="#list"/></svg></button><button class="blue" aria-label="Vybrat poslední"><svg><use href="#list"/></svg></button><button class="red" aria-label="Zrušit výběr"><svg><use href="#list"/></svg></button><button class="gray" aria-label="Předchozí výběr"><svg><use href="#list"/></svg></button><button aria-label="Invertovat"><svg><use href="#duopick"/></svg></button><button aria-label="Seznam"><svg><use href="#rows"/></svg></button><button aria-label="Vrstvy"><svg><use href="#layerspick"/></svg></button><button aria-label="Zachytit"><svg><use href="#capture"/></svg></button><button aria-label="Svar"><svg><use href="#weldpick"/></svg></button><span class="vsep"></span>
  <button aria-label="Cíl"><svg><use href="#targetpick"/></svg></button><button aria-label="Řetěz"><svg><use href="#chain"/></svg></button><button aria-label="Okno"><svg><use href="#square"/></svg></button>
  <span class="select"><select aria-label="Režim výběru"><option>Jeden výběr</option></select><i class="caret"></i></span>
  <button aria-label="Ukazatel"><svg><use href="#ghostpick"/></svg></button><button aria-label="Nastavení výběru"><svg><use href="#gearpick"/></svg></button><button aria-label="Spustit"><svg><use href="#play"/></svg></button><button aria-label="Body"><svg><use href="#dots"/></svg></button><button aria-label="Koncový bod"><svg><use href="#gline"/></svg></button><button aria-label="Střed úsečky"><svg><use href="#gmid"/></svg></button><button aria-label="Střed"><svg><use href="#gcenter"/></svg></button><button aria-label="Kvadrant"><svg><use href="#gquad"/></svg></button><button aria-label="Křivka"><svg><use href="#gwave"/></svg></button><button aria-label="Bod křivky"><svg><use href="#gwave2"/></svg></button><button aria-label="Tečna"><svg><use href="#gtan"/></svg></button><button aria-label="Na úsečce"><svg><use href="#gon"/></svg></button><button aria-label="Plocha"><svg><use href="#gmesh"/></svg></button><button aria-label="Síť"><svg><use href="#gmesh"/></svg></button>
</section>

<main class="work">
  <aside class="left">
    <div class="dockhead"><span>Konstrukční člen</span><button aria-label="Plovoucí"><svg class="i16"><use href="#float"/></svg></button><button aria-label="Zavřít"><svg class="i16"><use href="#close"/></svg></button></div>
    <div class="dock">
      <nav class="strip"><button class="cur" aria-label="Konstrukční člen"><svg><use href="#member"/></svg></button><button aria-label="Historie"><svg><use href="#tree"/></svg></button><button aria-label="Sestava"><svg><use href="#hier"/></svg></button><button aria-label="Pohledy"><svg><use href="#view"/></svg></button><button aria-label="Scéna"><svg><use href="#scene"/></svg></button><button aria-label="Role"><svg><use href="#users"/></svg></button></nav>
      <form class="panel">
        <div class="cmds"><button type="button" aria-label="OK"><svg><use href="#ok"/></svg></button><button type="button" aria-label="Storno"><svg><use href="#no"/></svg></button><button type="button" aria-label="Použít"><svg><use href="#apply"/></svg></button><button type="button" class="push">F</button><button type="button" aria-label="Informace"><svg viewBox="0 0 20 20"><circle cx="10" cy="10" r="8" fill="#1b4db8" stroke="#c3cbe0" stroke-width="2"/><text x="10" y="15" text-anchor="middle" font-size="15" class="icon-serif" fill="#fff">i</text></svg></button><button type="button" class="slim" aria-label="Rozbalit"><svg viewBox="0 0 12 20"><use href="#rollout"/></svg></button></div>
        <div class="panelbody">
          <div class="sections">
            <section class="sec"><h3 class="req"><i class="tri"></i>Povinné</h3>
              <div class="body p4">
                <div class="modes"><button type="button" class="sq sel" aria-label="Řetězec"><svg><use href="#path1"/></svg></button><button type="button" class="sq" aria-label="Úsečka"><svg><use href="#path2"/></svg></button></div>
                <div class="row tall"><label for="cesty">Cesty</label><div class="ctl"><input id="cesty" class="focus" value="* 0 označeno *"><button type="button" class="ic" aria-label="Rozbalit seznam"><svg viewBox="0 0 16 20"><path d="m3 3 5 5 5-5M3 11l5 5 5-5" fill="none" stroke="#222" stroke-width="1.500"/></svg></button><button type="button" class="ic redc" aria-label="Vybrat"><svg><use href="#drop"/></svg></button></div></div>
                <label class="check"><input type="checkbox" checked>Sloučit kolineární cesty</label>
              </div></section>
            <section class="sec"><h3><i class="tri"></i>Profil</h3>
              <div class="body">
                <svg class="diagram" viewBox="230 449 110 118" role="img" aria-label="Průřez trubky"><g fill="none" stroke="#111"><path d="M237 456v64M327 456v64M238 466h88"/><circle cx="282" cy="519" r="45" stroke-width="1.500"/><circle cx="282" cy="519" r="37" stroke-width="1.500"/><path d="m295 532 12 10M317 549l14 11"/></g><path d="m238 466 7-2v4zM326 466l-7-2v4zM309 543l-7-3 3-4zM316 548l7 3-3 4z" fill="#111"/><g font-size="13" font-weight="700"><text x="277" y="464">D</text><text x="331" y="566">t</text></g></svg>
                <div class="row"><label for="norma">Norma</label><div class="ctl"><input id="norma" value="AS" disabled></div></div>
                <div class="row"><label for="typ">Typ</label><div class="ctl typ"><input id="typ" value="Kruhové duté průřezy" disabled><button type="button" class="libbtn hot" aria-label="Knihovna profilů"><svg><use href="#lib"/></svg></button></div></div>
                <div class="row low"><label for="spec">Specifikace</label><span class="select"><select id="spec"><option>13.5X2.3 CHS</option></select><i class="caret"></i></span></div>
              </div></section>
            <section class="sec"><h3><i class="tri"></i>Transformovat profil</h3>
              <div class="body p5">
                <div class="row"><label for="rovina">Zarovnat rovinu</label><div class="ctl wide"><input id="rovina" value="Výchozí CSYS_XY"><button type="button" class="ic green" aria-label="Vybrat rovinu"><svg><use href="#drop"/></svg></button></div></div>
                <div class="row"><label for="umistit">Umístit profil</label><div class="ctl wide"><input id="umistit" value=""><button type="button" class="ic gold" aria-label="Vybrat bod"><svg><use href="#drop"/></svg></button></div></div>
                <div class="row"><label for="px">Posun X</label><div class="ctl"><span class="num"><input id="px" value="0"><span>mm</span><span class="spin"><i class="caret up"></i><i class="caret"></i></span></span><button type="button" class="ic gold" aria-label="Zadat hodnotu"><svg><use href="#drop"/></svg></button><i class="caret"></i></div></div>
                <div class="row"><label for="py">Posun Y</label><div class="ctl"><span class="num"><input id="py" value="0"><span>mm</span><span class="spin"><i class="caret up"></i><i class="caret"></i></span></span><button type="button" class="ic gold" aria-label="Zadat hodnotu"><svg><use href="#drop"/></svg></button><i class="caret"></i></div></div>
                <div class="row"><label for="uhel">Úhel otočení</label><div class="ctl"><span class="num"><input id="uhel" value="0"><span>deg</span><span class="spin"><i class="caret up"></i><i class="caret"></i></span></span><button type="button" class="ic gold" aria-label="Zadat hodnotu"><svg><use href="#drop"/></svg></button><i class="caret"></i></div></div>
                <div class="row mir"><span>Zrcadlový profil</span><div class="mirbtns"><button type="button" class="sq" aria-label="Zrcadlit vodorovně"><svg><use href="#mirrorh"/></svg></button><button type="button" class="sq" aria-label="Zrcadlit svisle"><svg><use href="#mirrorv"/></svg></button></div></div>
              </div></section>
            <section class="sec closed"><h3><i class="tri side"></i><label for="spoj">Spoj</label><input id="spoj" type="checkbox"></h3></section>
            <section class="sec"><h3><i class="tri"></i>Nastavení</h3>
              <div class="body p5"><div class="row"><label for="mat">Materiál</label><div class="ctl typ"><input id="mat" value="Ocel uhlík" disabled><button type="button" class="libbtn" aria-label="Vybrat materiál"><svg><use href="#folder"/></svg></button></div></div></div></section>
          </div>
          <div class="vscroll"><span class="cap"><i class="caret big up"></i></span><span class="thumb"></span><span class="rest"><i class="caret big"></i></span></div>
        </div>
      </form>
    </div>
  </aside>

  <section class="center">
    <div class="doctabs"><a class="doc" href="#">* Sestava002.Z3ASM <b>✕</b></a><button aria-label="Nová karta"><svg class="i16" viewBox="0 0 16 16"><path d="M8 2v13M2 8h13" stroke="#a3a0a0" stroke-width="2.500"/></svg></button><button class="more" aria-label="Seznam karet"><svg class="i16" viewBox="0 0 16 16"><path d="M3 4h10" stroke="#8f8a8e" stroke-width="2"/><path d="M3 8h10l-5 5z" fill="#8f8a8e"/></svg></button></div>
    <div class="view">
      <svg class="model" viewBox="555 240 945 744" role="img" aria-label="Drátový model sestavy">
        <g fill="none" stroke="#000" stroke-width="2" stroke-linejoin="round">
          <path d="M867 446.500 1216 559.500 990.600 748 641 636zM701 834 1050 947 1275.500 758 926 645zM867 446.500 926 645M1216 559.500 1275.500 758M990.600 748 1050 947M641 636 701 834M1041 503 816 692"/>
        </g>
        <path d="M958.500 696.500 941.500 639 987.500 600 1005 657.600z" fill="#b4a48a" fill-opacity=".2"/>
        <path d="M941.500 639 992.400 655.500 1009 713.400 958.500 696.500zM1005 657.600l51.700 16.400-47.700 39.400-50.500-17z" fill="#b08a58" fill-opacity=".15" stroke="#b0701a"/>
        <path d="M958.500 696.500 941.500 639 987.500 600 1005 657.600z" fill="none" stroke="#ff9c00" stroke-width="3"/>
        <path d="M958.500 696.500 1028 719" stroke="#7a4c70" stroke-width="2"/><path d="m1036 722 16 5M932 610l-5-16M1031 637l12-11" stroke="#b0701a"/>
        <path d="M941.500 639 936 622" stroke="#6aa02a" stroke-width="2"/><path d="m1005 657.600 14-12" stroke="#d04020" stroke-width="2"/>
        <path d="m932.600 610-1 14 8-2z" fill="#1fa32a"/><path d="m1031 637-8 12-7-4z" fill="#e00000"/><path d="m1036 722-13-8-3 7z" fill="#1a1ae0"/>
        <path d="m924.600 583 0 14 6-3z" fill="#a96408"/><path d="m1051 619-6 11-6-5z" fill="#7a4a08"/><path d="m1059 729-10-6-2 6z" fill="#c07810"/>
        <g class="axis" fill="#a66a10"><text x="915" y="577">Y</text><text x="1056" y="617">X</text><text x="1066" y="740">Z</text></g>
        <path d="M641 881 680 849" stroke="#f00" stroke-width="2"/><path d="M641 881 627 838" stroke="#2ad02a" stroke-width="2"/><path d="m641 881 39 12" stroke="#00f" stroke-width="2"/>
        <path d="m685 844-6 11-6-5z" fill="#c00000"/><path d="m624 826 1 14 6-1z" fill="#128a18"/><path d="m690 897-12-7-2 6z" fill="#1a1ae0"/>
        <g class="axis"><text x="617" y="826" fill="#2ad02a">Y</text><text x="686" y="845" fill="#f01010">X</text><text x="691" y="905" fill="#1a1ae0">Z</text></g>
      </svg>
      <div class="hud">
        <div class="viewbar"><button aria-label="Ukončit"><svg><use href="#exit"/></svg></button><button aria-label="Rovina"><svg><use href="#plane"/></svg></button><i class="caret"></i><button aria-label="Smazat"><svg><use href="#eraser"/></svg></button><button aria-label="Promítnout"><svg><use href="#boxy"/></svg></button><button aria-label="Stínovaný"><svg><use href="#boxb"/></svg></button><i class="caret"></i><button aria-label="Drátový"><svg><use href="#boxw"/></svg></button><i class="caret"></i><button aria-label="Síť"><svg><use href="#poly"/></svg></button><i class="caret"></i><button aria-label="Přiblížit"><svg><use href="#zoomdoc"/></svg></button><i class="caret"></i><button aria-label="Otáčet"><svg><use href="#target"/></svg></button><i class="caret"></i><button aria-label="Vše na obrazovku"><svg><use href="#fit"/></svg></button><button aria-label="Kóta"><svg><use href="#dim"/></svg></button><i class="caret"></i><button aria-label="Pozadí"><svg><use href="#screen"/></svg></button><i class="caret"></i><button aria-label="Barva hran"><span class="ink"></span></button><button aria-label="Barva ploch"><span class="face"></span></button><button aria-label="Hladiny"><svg><use href="#sheets"/></svg></button><i class="caret"></i><span class="layer"><svg><use href="#lamp"/></svg><svg viewBox="0 0 12 18"><circle cx="6" cy="9" r="5.500" fill="#e6e6e6" stroke="#b0b3b6"/></svg><span class="select"><select aria-label="Hladina" disabled><option>Hladina000</option></select><i class="caret"></i></span></span></div>
        <p>&lt;Shift-pravý-klik&gt; pro zobrazení filtru výběru.</p>
        <p>&lt;pravý-klik&gt; pro volby zadání entity.</p>
        <output>5484.71mm</output>
      </div>
    </div>
  </section>

  <aside class="right">
    <div class="dockhead"><span>Prohlížeč souborů</span><button aria-label="Plovoucí"><svg class="i16"><use href="#float"/></svg></button><button aria-label="Zavřít"><svg class="i16"><use href="#close"/></svg></button></div>
    <div class="dock files">
      <div class="browser">
        <div class="navbtns"><button disabled aria-label="Zpět"><svg><use href="#aleft"/></svg></button><button disabled aria-label="Vpřed"><svg><use href="#aright"/></svg></button><button disabled aria-label="Nahoru"><svg><use href="#aup"/></svg></button><button aria-label="Obnovit"><svg><use href="#reload"/></svg></button></div>
        <ul class="filetree"><li><i class="chev"></i><svg><use href="#star"/></svg>Oblíbené</li><li><i class="chev"></i><svg><use href="#folder"/></svg>(C:)</li><li></li><li></li></ul>
        <section class="sec"><h3><i class="tri"></i>Hledat</h3><div class="find"><span class="select"><input type="text" placeholder="Hledat..." aria-label="Hledat"><i class="caret"></i></span><button aria-label="Spustit hledání"><svg><use href="#lens"/></svg></button><button aria-label="Možnosti hledání"><svg><use href="#pliers"/></svg></button></div></section>
        <section class="sec closed"><h3><i class="tri side"></i>Seznam souborů</h3></section>
        <section class="sec closed"><h3><i class="tri side"></i>Náhled</h3></section>
      </div>
      <nav class="strip"><button class="cur" aria-label="Soubory"><svg><use href="#folder"/></svg></button><button aria-label="Knihovna dílů"><svg><use href="#boltbox"/></svg></button><button aria-label="Hladiny"><svg><use href="#sheets"/></svg></button><button aria-label="Materiály"><svg><use href="#folderball"/></svg></button><button aria-label="Barvy dílů"><svg><use href="#partcolor"/></svg></button></nav>
    </div>
    <div class="dockhead out"><span>Výstup</span><button aria-label="Zastavit"><svg class="i16" viewBox="0 0 16 16"><path d="M3 3h10v10H3z" fill="#222"/></svg></button><button aria-label="Plovoucí"><svg class="i16"><use href="#float"/></svg></button><button aria-label="Zavřít"><svg class="i16"><use href="#close"/></svg></button></div>
    <div class="output"><div class="log"><p>3D rám</p><p>3D rám</p><p>Vytvořit úsečku</p><p>Vytvořit úsečku</p><p>Konstrukční člen</p></div><div class="vscroll short"><span class="cap"><i class="caret big up"></i></span><span class="thumb"></span><span class="rest"><i class="caret big"></i></span></div></div>
  </aside>
</main>

<footer class="status"><span>Vyberte čáry a křivky k vytvoření konstrukčních členů.</span><div class="statbtns"><button aria-label="Nástroje"><svg><use href="#tool"/></svg></button><button aria-label="Zobrazení"><svg><use href="#monitor"/></svg></button><button aria-label="Zprávy"><svg><use href="#note"/></svg></button></div><input type="text" aria-label="Příkazový řádek"></footer>
</div>
</body>
</html>
```
FILE: styles.css
```css
* { box-sizing: border-box; }
body { margin: 0; background: #e1e5e8; color: #111; font: 14px/20px "Open Sans", "Noto Sans", sans-serif; }
button, input, select { font: inherit; color: inherit; margin: 0; padding: 0; border: 0; background: none; border-radius: 0; }
input, select { min-width: 0; width: 100%; background: #fff; border: 1px solid #b7bcc6; outline: 0; }
select { appearance: none; opacity: 1; }
a { color: inherit; text-decoration: none; }
h2, h3, p, ul { margin: 0; padding: 0; font: inherit; }
svg { display: block; }
.defs { position: absolute; width: 0; height: 0; }
.icon-bold { font-family: "Liberation Sans", sans-serif; font-weight: bold; }
.icon-serif { font-family: "Liberation Serif", serif; font-weight: bold; }
.i16 { width: 16px; height: 16px; }
.i20 { width: 20px; height: 20px; }
.i24 { width: 24px; height: 24px; }
.caret { flex: none; width: 7px; height: 4px; background: #333; clip-path: polygon(0 0, 100% 0, 50% 100%); display: block; }
.caret.up { transform: rotate(180deg); }
.caret.big { width: 10px; height: 6px; background: #444; }
.caret.inl { display: inline-block; vertical-align: middle; }
.vsep { width: 1px; height: 20px; background: #c3c7cc; flex: none; }
.select { display: grid; align-items: center; }
.select > * { grid-area: 1 / 1; }
.select > .caret { justify-self: end; margin-right: 8px; }

.app { display: flex; flex-direction: column; height: 100vh; overflow: hidden; }
.titlebar { display: flex; align-items: center; height: 32px; flex: none; white-space: nowrap; }
.titlebar .vsep { height: 14px; }
.quick { display: flex; margin-left: 8px; }
.quick button { width: 28px; height: 24px; display: grid; place-items: center; }
.quick svg, .selbar button svg { width: 20px; height: 20px; }
.quick .narrow { width: 18px; }
.menu { display: flex; gap: 18px; margin-left: 11px; color: #000; }
.apptitle { margin-left: auto; color: #888b8f; }
.winbtns { display: flex; gap: 10px; margin: 0 4px 4px 230px; }
.winbtns svg { width: 20px; height: 18px; }

.tabs { display: flex; height: 28px; flex: none; border-bottom: 1px solid #b5bac5; color: #444; white-space: nowrap; }
.tabs > a { flex: none; padding: 0 10px 0 11px; line-height: 28px; height: 28px; }
.tabs .file { width: 88px; padding: 0; margin-right: 3px; text-align: center; background: #2b61b5; border: 1px solid #174a98; color: #fff; line-height: 26px; }
.tabs .active { background: #fcfcfc; border: 1px solid #b5bac5; border-bottom: 0; padding: 0 8px; margin: 0 2px; line-height: 26px; color: #333; }
.tabtools { display: flex; flex: 1; align-items: center; justify-content: flex-end; gap: 4px; }
.search { display: flex; width: 180px; height: 25px; align-items: center; background: #fff; border: 1px solid #b5bac5; padding: 0 6px 0 3px; margin: 0 6px 0 9px; }
.search input { border: 0; height: 20px; }
.search input::placeholder { color: #777; }
.helpbtn { display: flex; align-items: center; gap: 8px; margin: 0 4px 0 10px; }

.ribbon { display: flex; height: 119px; flex: none; background: #fcfcfc; border-bottom: 1px solid #b5bac5; padding-top: 6px; }
.group { display: flex; flex-direction: column; border-right: 1px solid #d0d3d8; height: 110px; flex: none; }
.group h2 { text-align: center; color: #6b7385; line-height: 20px; margin-top: auto; margin-bottom: 2px; }
.items { display: flex; align-items: flex-start; padding-left: 4px; }
.ribbon button { width: 50px; text-align: center; white-space: nowrap; padding-top: 1px; color: #222; }
.ribbon button svg { width: 38px; height: 38px; margin: 0 auto 4px; }
.ribbon button > .caret { margin: 8px auto; }
.ribbon button > .caret.inl { margin: 0 0 0 4px; }
.ribbon .w54 { width: 54px; }
.ribbon .w60 { width: 62px; }
.ribbon .w64 { width: 66px; }
.ribbon .w88 { width: 88px; }
.ribbon .w116 { width: 116px; }
.g-cesta { width: 173px; }
.g-cesta .items { padding-left: 6px; }
.g-profil { width: 183px; }
.g-profil .items { padding-left: 1px; }
.g-spoj { width: 247px; }
.g-pokr { width: 133px; }
.g-oset { width: 179px; }
.g-prvek { width: 153px; }
.g-kus { width: 93px; }
.g-kus .items { padding-left: 2px; }
.g-uprav { width: 183px; }
.g-uprav .items { padding-left: 14px; gap: 9px; }
.g-zakl { width: 75px; }
.g-knih { width: 99px; }
.marked { position: relative; }
.ribbon .marked::after { content: ""; position: absolute; inset: -8px 0 -11px; border: 5px solid #ed1c24; }

.selbar { display: flex; align-items: center; height: 34px; flex: none; padding-top: 2px; }
.grip { width: 3px; height: 22px; margin: 0 4px 0 2px; background: repeating-linear-gradient(#8f97b0 0 2px, transparent 2px 4px); }
.selbar button { width: 28px; height: 27px; display: grid; place-items: center; flex: none; }
.selbar .w15 { width: 15px; }
.selbar .on { width: 27px; background: #ffe273; border: 1px solid #c49a3a; }
.selbar .vsep { margin: 0 4px; }
.selbar .blue { fill: #1688a8; }
.selbar .red { fill: #c8202c; }
.selbar .gray { fill: #999; }
.selbar .select { width: 166px; margin-right: 1px; flex: none; }
.selbar select { height: 26px; padding-left: 3px; }
.selbar .off select { color: #888; background: #efefef; border-color: #dcdfe3; }
.off .caret { background: #aaa; }

.work { flex: 1; min-height: 0; display: grid; grid-template-columns: 553px minmax(0, 1fr) 413px; }
.left, .center, .right { display: flex; flex-direction: column; min-height: 0; min-width: 0; }
.dockhead { display: flex; align-items: center; gap: 8px; height: 27px; flex: none; padding: 0 10px 0 3px; color: #444; border-bottom: 1px solid #b7bcc6; }
.dockhead span { flex: 1; }
.dock { display: flex; flex: 1; min-height: 0; }
.strip { width: 37px; flex: none; display: flex; flex-direction: column; }
.strip button { height: 60px; display: grid; place-items: center start; padding: 0 0 4px 2px; }
.strip button svg { width: 30px; height: 30px; }
.strip .cur { background: #fcfcfc; border-bottom: 1px solid #b7bcc6; }
.panel { flex: 1; border: 1px solid #b7bcc6; border-top: 0; margin-right: 2px; display: flex; flex-direction: column; min-width: 0; }
.cmds { display: flex; gap: 2px; padding: 3px 3px 4px 2px; }
.cmds button, .sq, .navbtns button, .find button, .libbtn { background: #fcfcfc; border: 1px solid #b7bcc6; display: grid; place-items: center; flex: none; }
.cmds button { width: 33px; height: 29px; }
.cmds svg { width: 21px; height: 21px; }
.cmds .push { margin-left: auto; font: 16px/20px "Liberation Sans", sans-serif; }
.cmds .slim { width: 17px; }
.cmds .slim svg { width: 12px; }
.panelbody { flex: 1; min-height: 0; display: flex; gap: 3px; padding: 0 4px 2px; }
.sections { flex: 1; min-width: 0; overflow: hidden; display: flex; flex-direction: column; gap: 2px; }
.sec { border: 1px solid #b7bcc6; background: #dce1e9; flex: none; }
.sec.closed { border-bottom: 0; }
.sec h3 { display: flex; align-items: center; gap: 5px; height: 29px; padding-left: 4px; font-weight: 700; color: #333; background: #fcfcfc; border-bottom: 1px solid #b7bcc6; }
.sec .req { background: #faebb6; }
.tri { width: 12px; height: 10px; background: #555a63; clip-path: polygon(0 0, 100% 0, 50% 100%); }
.tri.side { clip-path: polygon(10% 0, 90% 50%, 10% 100%); height: 12px; }
.body { display: flex; flex-direction: column; gap: 3px; padding: 0 9px 2px 10px; color: #222; }
.body.p4 { padding-top: 4px; gap: 2px; }
.body.p5 { padding-top: 5px; }
.modes { display: flex; gap: 2px; padding-left: 184px; }
.sq { width: 45px; height: 45px; }
.sq svg { width: 43px; height: 43px; }
.sq.sel { background: #ffe273; border-color: #c49a3a; }
.row { display: grid; grid-template-columns: 177px 1fr; align-items: center; height: 28px; }
.row.tall { height: 29px; }
.row.low { height: 26px; }
.row.mir { height: 45px; }
.ctl { display: flex; align-items: center; height: 100%; }
.row input, .row select { height: 100%; padding-left: 2px; color: #111; }
.row .select { height: 26px; }
.row input:disabled { background: #efefef; color: #888; }
.row input.focus { border: 1px solid #1883d7; width: 228px; flex: none; margin-right: 4px; outline: 1px solid #8fbfe8; outline-offset: -2px; }
.ic { width: 16px; height: 20px; flex: none; margin: 0 9px 4px 0; }
.ic svg { width: 16px; height: 20px; }
.redc { color: #cf3a48; margin-left: 3px; }
.green { color: #2fae4c; }
.gold { color: #c8a028; }
.wide { gap: 7px; }
.wide .ic { margin-right: 8px; }
.num { display: flex; flex: 1; height: 100%; align-items: center; gap: 7px; background: #fff; border: 1px solid #b7bcc6; padding-right: 6px; margin-right: 7px; }
.num input { border: 0; height: 24px; flex: 1; }
.spin { display: grid; gap: 8px; }
.spin .caret { width: 5px; height: 3px; }
.ctl > .caret { margin-right: 7px; }
.check { display: flex; align-items: center; gap: 6px; height: 25px; color: #111; }
input[type="checkbox"] { appearance: none; width: 16px; height: 16px; flex: none; border: 1px solid #8e949e; background: linear-gradient(135deg, #c4c9d2, #eef1f6); box-shadow: inset 0 0 0 2px #eceff3; display: grid; place-items: center; }
input[type="checkbox"]:checked::before { content: ""; width: 10px; height: 11px; background: #44577f; clip-path: polygon(0 50%, 18% 42%, 36% 66%, 84% 0, 100% 4%, 38% 100%); }
.diagram { width: 110px; height: 120px; margin: 0 0 0 177px; }
.typ { gap: 2px; }
.libbtn { width: 28px; height: 28px; position: relative; }
.libbtn svg { width: 24px; height: 24px; }
.hot::after { content: ""; position: absolute; inset: -6px -8px; border: 5px solid #ed1c24; }
.mirbtns { display: flex; gap: 3px; padding-left: 75px; }
.sec h3 input { margin-left: auto; margin-right: 14px; }
.vscroll { width: 19px; flex: none; display: flex; flex-direction: column; background: #d3d8e2; }
.cap { height: 20px; display: grid; place-items: center; }
.thumb { flex: 1; border: 1px solid #9096a2; background: repeating-linear-gradient(#888 0 1px, transparent 1px 3px) center / 8px 9px no-repeat #e8ecf2; }
.rest { height: 89px; display: grid; place-items: end center; padding-bottom: 8px; }

.doctabs { height: 27px; flex: none; display: flex; align-items: center; gap: 6px; border-bottom: 1px solid #b7bcc6; padding-right: 4px; white-space: nowrap; }
.doc { width: 213px; height: 27px; line-height: 25px; padding-left: 38px; margin-left: 1px; background: #fcfcfc; border: 1px solid #b7bcc6; border-bottom: 0; color: #111; }
.doc b { color: #7a663c; margin-left: 2px; }
.more { margin-left: auto; }
.view { flex: 1; min-height: 0; display: grid; grid-template: minmax(0, 1fr) / minmax(0, 1fr); border: solid #b7bcc6; border-width: 0 2px 1px 1px; background: linear-gradient(#fff, #a0a0a0); }
.view > * { grid-area: 1 / 1; }
.model { width: 100%; height: 100%; }
.axis { font: 18px "Open Sans", sans-serif; }
.hud { display: flex; flex-direction: column; }
.hud p { margin: 0 0 6px 21px; color: #222; font-family: "Noto Sans", sans-serif; }
.hud output { margin: auto 0 0 4px; font: 20px/24px "Liberation Sans", sans-serif; }
.viewbar { display: flex; align-items: center; height: 32px; margin: 0 0 -4px 115px; }
.viewbar > button { width: 29px; height: 26px; display: grid; place-items: center; flex: none; }
.viewbar > button svg { width: 20px; height: 20px; }
.viewbar > .caret { margin: 0 6px 0 2px; }
.ink { width: 20px; height: 11px; background: #000; }
.face { width: 20px; height: 18px; background: #bde7f7; border: 1px solid #222; }
.layer { display: flex; align-items: center; width: 144px; height: 27px; background: #ededed; border: 1px solid #d3d6db; padding-left: 10px; gap: 4px; }
.layer > svg { width: 12px; height: 18px; flex: none; }
.layer .select { flex: 1; }
.layer select { background: none; border: 0; color: #888; padding-left: 4px; }
.layer .caret { background: #aaa; }

.right .dockhead { padding: 0 6px; }
.browser { flex: 1; display: flex; flex-direction: column; gap: 2px; padding: 2px 1px 0; background: #dce1e9; border: solid #b7bcc6; border-width: 0 1px 1px; min-width: 0; }
.right .strip { width: 35px; }
.navbtns { display: flex; gap: 3px; height: 33px; margin: -2px 0 0 -1px; padding: 2px 0 0 1px; background: #e1e5e8; }
.navbtns button { width: 36px; height: 31px; }
.navbtns button:disabled { background: #ececec; border-color: #cfd2d6; }
.navbtns svg { width: 22px; height: 20px; }
.filetree { list-style: none; background: #fff; border: 1px solid #b7bcc6; height: 97px; margin-bottom: 6px; color: #222; }
.filetree li { display: flex; align-items: center; gap: 4px; height: 23px; padding-left: 6px; }
.filetree li:nth-child(even) { background: #f4f4f4; }
.filetree svg { width: 20px; height: 18px; }
.chev { width: 7px; height: 7px; border: solid #777; border-width: 1px 1px 0 0; transform: rotate(45deg); margin: 0 6px 0 -2px; }
.find { display: flex; gap: 3px; padding: 3px 2px 2px; }
.find .select { flex: 1; }
.find input { height: 31px; padding-left: 4px; }
.find input::placeholder { color: #888; }
.find button { width: 47px; height: 31px; }
.find svg { width: 20px; height: 20px; }
.right .out { height: 29px; }
.output { display: flex; height: 93px; flex: none; background: #fff; border-left: 1px solid #b7bcc6; border-bottom: 1px solid #b7bcc6; margin-left: 1px; }
.log { flex: 1; overflow: hidden; display: flex; flex-direction: column; justify-content: flex-end; padding: 0 0 3px 4px; color: #000; }
.log p { flex: none; }
.short .cap { height: 49px; place-items: start center; padding-top: 9px; }
.short .rest { height: 21px; }

.status { display: flex; align-items: center; height: 32px; flex: none; padding-left: 3px; color: #333; }
.status > span { flex: 1; padding-top: 4px; }
.statbtns { display: flex; gap: 10px; height: 30px; padding: 0 9px 0 17px; border-left: 1px solid #888; align-items: center; }
.statbtns button { width: 25px; height: 25px; background: #ffe273; border: 1px solid #c49a3a; display: grid; place-items: center; }
.statbtns svg { width: 19px; height: 19px; }
.status input { width: 437px; height: 27px; border-right: 0; }
```
